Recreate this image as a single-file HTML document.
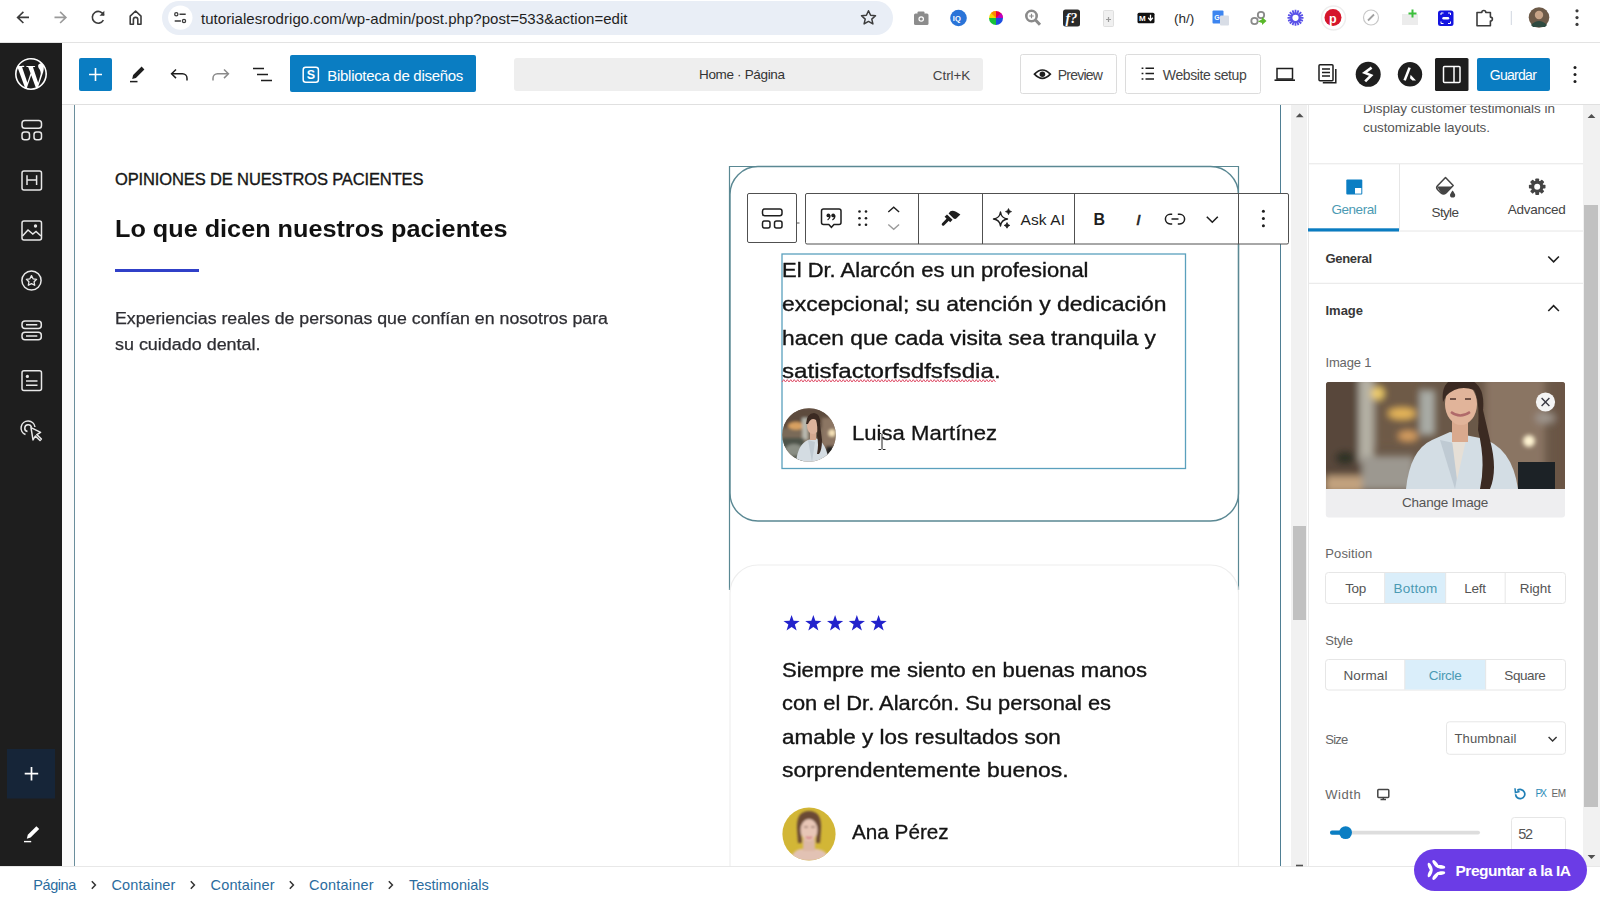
<!DOCTYPE html>
<html><head><meta charset="utf-8">
<style>
*{box-sizing:border-box;margin:0;padding:0}
html,body{width:1600px;height:900px;overflow:hidden;background:#fff;font-family:"Liberation Sans",sans-serif;position:relative}
.a{position:absolute}
svg{display:block}
/* browser chrome */
#chrome{left:0;top:0;width:1600px;height:43px;background:#fff;border-bottom:1px solid #e3e3e3}
#omni{left:162px;top:1px;width:731px;height:34px;border-radius:17px;background:#e9eef6}
#url{left:201px;top:8px;font-size:15.5px;color:#1f1f1f;letter-spacing:0}
/* wp header */
#hdr{left:62px;top:43px;width:1538px;height:62px;background:#fff;border-bottom:1px solid #e0e0e0;z-index:8}
#wpside{left:0;top:43px;width:62px;height:824px;background:#1e1e1e;z-index:8}
#gap{left:62px;top:105px;width:12px;height:762px;background:#fbfbfb}
#canvas{left:74px;top:105px;width:1207px;height:762px;background:#fff;border-left:1px solid #6a8e9c}
#rline{left:1280px;top:105px;width:1px;height:762px;background:#4f7f94}
#sb1{left:1291px;top:105px;width:16px;height:762px;background:#f1f1f1}
#sb1t{left:1293px;top:526px;width:13px;height:94px;background:#c1c1c1}
#side{left:1308px;top:105px;width:275px;height:762px;background:#fff;border-left:1px solid #e8e8e8}
#sb2{left:1583px;top:105px;width:17px;height:762px;background:#f1f1f1}
#sb2t{left:1584px;top:205px;width:14px;height:602px;background:#c1c1c1}
#foot{left:0;top:866px;width:1600px;height:34px;background:#fff;border-top:1px solid #e8e8e8;z-index:20}
.bc{top:876px;font-size:15px;color:#2271b1}
.bcs{top:874px;font-size:16px;color:#555}
</style></head><body>
<div id="chrome" class="a"></div>
<div id="omni" class="a"></div>


<div id="hdr" class="a"></div>
<div id="wpside" class="a"></div>
<div id="gap" class="a"></div>
<div id="canvas" class="a"></div>
<div id="rline" class="a"></div>
<div id="sb1" class="a"></div>
<div id="sb1t" class="a"></div>
<div id="side" class="a"></div>
<div id="sb2" class="a"></div>
<div id="sb2t" class="a"></div>
<div id="foot" class="a"></div>


<!-- canvas content -->


<div class="a" style="left:115px;top:269px;width:84px;height:3px;background:#3040c8"></div>


<svg class="a" style="left:0;top:0" width="1600" height="866">
 <!-- selected container outline -->
 <path d="M729.5 590 V166.5 H1238.5 V590" fill="none" stroke="#5a8893" stroke-width="1.2"/>
 <!-- card 1 rounded -->
 <rect x="730" y="166.5" width="508.5" height="354.5" rx="28" fill="none" stroke="#5a8893" stroke-width="1.4"/>
 <!-- card 2 faint -->
 <rect x="730" y="565" width="508.5" height="400" rx="28" fill="none" stroke="#eeeeee" stroke-width="1.2"/>
 <!-- selection box -->
 <rect x="782" y="254" width="403.5" height="214.5" fill="none" stroke="#5aa0bd" stroke-width="1.3"/>
</svg>










<!-- WP header content -->
<svg class="a" style="left:0;top:0;z-index:9" width="1600" height="105">
 <!-- WP logo -->
 <path transform="translate(15,58) scale(1.3333)" fill="#fff" d="M21.469 6.825c.84 1.537 1.318 3.3 1.318 5.175 0 3.979-2.156 7.456-5.363 9.325l3.295-9.527c.615-1.54.82-2.771.82-3.864 0-.405-.026-.78-.07-1.11m-7.981.105c.647-.03 1.232-.105 1.232-.105.582-.075.514-.93-.067-.899 0 0-1.755.135-2.88.135-1.064 0-2.850-.15-2.850-.15-.585-.03-.661.855-.075.885 0 0 .54.061 1.125.09l1.68 4.605-2.37 7.08L5.354 6.9c.649-.03 1.234-.1 1.234-.1.585-.075.516-.93-.065-.896 0 0-1.746.138-2.874.138-.2 0-.438-.008-.69-.015C4.911 3.15 8.235 1.215 12 1.215c2.809 0 5.365 1.072 7.286 2.833-.046-.003-.091-.009-.141-.009-1.06 0-1.812.923-1.812 1.914 0 .89.513 1.643 1.06 2.531.411.72.89 1.643.89 2.977 0 .915-.354 1.994-.821 3.479l-1.075 3.585-3.9-11.61.001.014zM12 22.784c-1.059 0-2.081-.153-3.048-.437l3.237-9.406 3.315 9.087c.024.053.05.101.078.149-1.12.393-2.325.609-3.582.609M1.211 12c0-1.564.336-3.05.935-4.39L7.29 21.709C3.694 19.960 1.212 16.271 1.211 12M12 0C5.385 0 0 5.385 0 12s5.385 12 12 12 12-5.385 12-12S18.615 0 12 0"/>
 <!-- plus button -->
 <rect x="79" y="58" width="33" height="33" rx="2" fill="#0a7dc2"/>
 <path d="M95.5 68v13M89 74.5h13" stroke="#fff" stroke-width="1.6"/>
 <!-- pencil -->
 <path d="M141.6 66.6 L144.4 69.4 L135.9 77.9 L132.2 79 L133.1 75.1z" fill="#1e1e1e"/>
 <path d="M130 81.6h7.5" stroke="#1e1e1e" stroke-width="1.5"/>
 <!-- undo -->
 <path d="M171.8 73.8 H182.5 A4.5 4.5 0 0 1 187 78.3 V80.5" fill="none" stroke="#1e1e1e" stroke-width="1.5"/>
 <path d="M176 69.5 L171.6 73.8 L176 78.1" fill="none" stroke="#1e1e1e" stroke-width="1.5"/>
 <!-- redo -->
 <path d="M228.2 73.8 H217.5 A4.5 4.5 0 0 0 213 78.3 V80.5" fill="none" stroke="#8a8a8a" stroke-width="1.5"/>
 <path d="M224 69.5 L228.4 73.8 L224 78.1" fill="none" stroke="#8a8a8a" stroke-width="1.5"/>
 <!-- list view -->
 <path d="M253 68.6h11M257 74.6h11M261 80.6h11" stroke="#1e1e1e" stroke-width="1.5"/>
 <!-- biblioteca -->
 <rect x="290" y="55" width="186" height="37" rx="2" fill="#0a7dc2"/>
 <rect x="303.2" y="67.2" width="15.2" height="15" rx="2.5" fill="none" stroke="#fff" stroke-width="1.5"/>
 <!-- command bar -->
 <rect x="514" y="58" width="469" height="33" rx="3" fill="#eeeeee"/>
 <!-- preview -->
 <rect x="1020.5" y="54.5" width="96" height="39" rx="2" fill="#fff" stroke="#dcdcdc"/>
 <rect x="1125.5" y="54.5" width="135" height="39" rx="2" fill="#fff" stroke="#dcdcdc"/>
 <path d="M1034.5 74.2 Q1042.4 65.8 1050.3 74.2 Q1042.4 82.6 1034.5 74.2Z" fill="none" stroke="#1e1e1e" stroke-width="1.7"/>
 <circle cx="1042.4" cy="74.2" r="2.8" fill="#1e1e1e"/>
 <!-- website setup list -->
 <path d="M1145.5 68.3h8.5M1145.5 73.6h8.5M1145.5 78.9h8.5" stroke="#1e1e1e" stroke-width="1.5"/>
 <path d="M1141.6 68.3h1.8M1141.6 73.6h1.8M1141.6 78.9h1.8" stroke="#1e1e1e" stroke-width="1.5"/>
 <!-- laptop -->
 <rect x="1277" y="68.5" width="15.5" height="10.5" fill="none" stroke="#1e1e1e" stroke-width="1.5"/>
 <path d="M1274.5 80.2h20.5" stroke="#1e1e1e" stroke-width="1.6"/>
 <!-- pages icon -->
 <rect x="1319" y="64.8" width="14" height="16" rx="1" fill="none" stroke="#1e1e1e" stroke-width="1.5"/>
 <path d="M1322 69h8M1322 72.5h8M1322 76h8" stroke="#1e1e1e" stroke-width="1.3"/>
 <path d="M1335.8 69v13.8h-13" fill="none" stroke="#1e1e1e" stroke-width="1.5"/>
 <!-- S circle -->
 <circle cx="1368.2" cy="74.3" r="12.5" fill="#1e1e1e"/>
 <path d="M1371.6 67.6 L1364.6 72.6 L1371.2 75.4 L1365.2 81.4" fill="none" stroke="#fff" stroke-width="2.6" stroke-linejoin="miter" stroke-miterlimit="3"/>
 <!-- A circle -->
 <circle cx="1410" cy="74.3" r="12.2" fill="#1e1e1e"/>
 <path d="M1409.6 67.6 L1404.6 80.4" fill="none" stroke="#fff" stroke-width="2.6"/><path d="M1410.6 74.8 L1416 80.6 L1412.4 80.6 L1410 78.2z" fill="#fff"/>
 <!-- black square -->
 <rect x="1435" y="58" width="33.5" height="33" rx="1.5" fill="#1e1e1e"/>
 <rect x="1443.5" y="66.5" width="16.5" height="16" rx="1" fill="none" stroke="#fff" stroke-width="1.5"/>
 <path d="M1454 66.5v16" stroke="#fff" stroke-width="1.5"/>
 <!-- guardar -->
 <rect x="1477" y="58" width="73" height="33" rx="2" fill="#0a7dc2"/>
 <!-- dots -->
 <circle cx="1575" cy="67.5" r="1.5" fill="#1e1e1e"/>
 <circle cx="1575" cy="74.5" r="1.5" fill="#1e1e1e"/>
 <circle cx="1575" cy="81.5" r="1.5" fill="#1e1e1e"/>
</svg>










<!--B:canvastext-->
<div class="a t" style="left:115px;top:171.23px;font-size:16.5px;line-height:16.5px;letter-spacing:-0.128px;color:#161616;-webkit-text-stroke:0.35px #161616">OPINIONES DE NUESTROS PACIENTES</div>
<div class="a t" style="left:115px;top:217.93px;font-size:23px;line-height:23px;letter-spacing:0.000px;color:#111;font-weight:bold;transform:scaleX(1.0968);transform-origin:0 0">Lo que dicen nuestros pacientes</div>
<div class="a t" style="left:115px;top:310.76px;font-size:16px;line-height:16px;letter-spacing:0.000px;color:#2e2e33;transform:scaleX(1.1085);transform-origin:0 0;-webkit-text-stroke:0.25px #2e2e33">Experiencias reales de personas que confían en nosotros para</div>
<div class="a t" style="left:115px;top:337.26px;font-size:16px;line-height:16px;letter-spacing:0.000px;color:#2e2e33;transform:scaleX(1.1203);transform-origin:0 0;-webkit-text-stroke:0.25px #2e2e33">su cuidado dental.</div>
<div class="a t" style="left:782px;top:261.44px;font-size:19.8px;line-height:19.8px;letter-spacing:0.000px;color:#141414;transform:scaleX(1.1105);transform-origin:0 0;-webkit-text-stroke:0.35px #141414">El Dr. Alarcón es un profesional</div>
<div class="a t" style="left:782px;top:294.94px;font-size:19.8px;line-height:19.8px;letter-spacing:0.000px;color:#141414;transform:scaleX(1.1578);transform-origin:0 0;-webkit-text-stroke:0.35px #141414">excepcional; su atención y dedicación</div>
<div class="a t" style="left:782px;top:328.54px;font-size:19.8px;line-height:19.8px;letter-spacing:0.000px;color:#141414;transform:scaleX(1.1489);transform-origin:0 0;-webkit-text-stroke:0.35px #141414">hacen que cada visita sea tranquila y</div>
<div class="a t" style="left:782px;top:361.74px;font-size:19.8px;line-height:19.8px;letter-spacing:0.000px;color:#141414;transform:scaleX(1.2198);transform-origin:0 0;-webkit-text-stroke:0.35px #141414">satisfactorfsdfsfsdia.</div>
<div class="a t" style="left:852px;top:422.85px;font-size:20.5px;line-height:20.5px;letter-spacing:0.000px;color:#141414;transform:scaleX(1.0784);transform-origin:0 0;-webkit-text-stroke:0.3px #141414">Luisa Martínez</div>
<div class="a t" style="left:782px;top:660.74px;font-size:19.8px;line-height:19.8px;letter-spacing:0.000px;color:#141414;transform:scaleX(1.1139);transform-origin:0 0;-webkit-text-stroke:0.35px #141414">Siempre me siento en buenas manos</div>
<div class="a t" style="left:782px;top:694.34px;font-size:19.8px;line-height:19.8px;letter-spacing:0.000px;color:#141414;transform:scaleX(1.1041);transform-origin:0 0;-webkit-text-stroke:0.35px #141414">con el Dr. Alarcón. Su personal es</div>
<div class="a t" style="left:782px;top:727.94px;font-size:19.8px;line-height:19.8px;letter-spacing:0.000px;color:#141414;transform:scaleX(1.1366);transform-origin:0 0;-webkit-text-stroke:0.35px #141414">amable y los resultados son</div>
<div class="a t" style="left:782px;top:761.14px;font-size:19.8px;line-height:19.8px;letter-spacing:0.000px;color:#141414;transform:scaleX(1.1582);transform-origin:0 0;-webkit-text-stroke:0.35px #141414">sorprendentemente buenos.</div>
<div class="a t" style="left:852px;top:822.05px;font-size:20.5px;line-height:20.5px;letter-spacing:0.000px;color:#141414;transform:scaleX(1.0101);transform-origin:0 0;-webkit-text-stroke:0.3px #141414">Ana Pérez</div>
<!--E:canvastext-->
<!--B:toolbar-->
<svg class="a" style="left:0;top:0;z-index:5" width="1600" height="300">
 <rect x="747.5" y="193.5" width="49" height="49" rx="1.5" fill="#fff" stroke="#505050" stroke-width="1"/>
 <path d="M797 223h2.5" stroke="#505050" stroke-width="1"/>
 <rect x="805.5" y="193.5" width="483" height="50.5" rx="1.5" fill="#fff" stroke="#505050" stroke-width="1"/>
 <path d="M918.5 194v50M982.5 194v50M1074.5 194v50M1238.5 194v50" stroke="#505050" stroke-width="1"/>
 <!-- parent selector icon -->
 <rect x="762.5" y="209" width="19.5" height="6.8" rx="2.2" fill="none" stroke="#1e1e1e" stroke-width="1.5"/>
 <rect x="762.5" y="221" width="7.5" height="7" rx="2" fill="none" stroke="#1e1e1e" stroke-width="1.5"/>
 <rect x="774.5" y="221" width="7.5" height="7" rx="2" fill="none" stroke="#1e1e1e" stroke-width="1.5"/>
 <!-- quote bubble -->
 <path d="M823.5 209h15.5a2 2 0 0 1 2 2v11.5a2 2 0 0 1 -2 2h-5l-2.6 2.8l-2.6 -2.8h-5.3a2 2 0 0 1 -2 -2v-11.5a2 2 0 0 1 2 -2z" fill="none" stroke="#1e1e1e" stroke-width="1.5"/>
 <g fill="#1e1e1e"><circle cx="828.4" cy="215.4" r="1.9"/><circle cx="833.2" cy="215.4" r="1.9"/></g>
 <path d="M830.1 215.6 Q830.1 218.6 827.6 220M834.9 215.6 Q834.9 218.6 832.4 220" fill="none" stroke="#1e1e1e" stroke-width="1.4"/>
 <!-- drag dots -->
 <g fill="#1e1e1e"><circle cx="859.5" cy="211.5" r="1.3"/><circle cx="866" cy="211.5" r="1.3"/><circle cx="859.5" cy="218.2" r="1.3"/><circle cx="866" cy="218.2" r="1.3"/><circle cx="859.5" cy="224.8" r="1.3"/><circle cx="866" cy="224.8" r="1.3"/></g>
 <!-- chevrons -->
 <path d="M888.3 212L893.7 207.3L899.1 212" fill="none" stroke="#1e1e1e" stroke-width="1.4"/>
 <path d="M888.3 224.5L893.7 229.2L899.1 224.5" fill="none" stroke="#9a9a9a" stroke-width="1.4"/>
 <!-- brush -->
 <path d="M943.2 224.2 L948 219.4" stroke="#1e1e1e" stroke-width="3" stroke-linecap="round"/>
 <path d="M944.6 216.8 L947 214.4 L952.6 219.8 L950.2 222.2z" fill="#1e1e1e"/>
 <path d="M948.6 213.4 L950.4 211.2 Q954.2 209.6 960.4 214.6 L956 218.8 Q954.6 219.2 953.6 218.6z" fill="#1e1e1e"/>
 <!-- sparkles -->
 <path d="M1000.5 212 Q1001.3 218.3 1007.5 219 Q1001.3 219.7 1000.5 226 Q999.7 219.7 993.5 219 Q999.7 218.3 1000.5 212z" fill="none" stroke="#1e1e1e" stroke-width="1.4" stroke-linejoin="round"/>
 <path d="M1008.5 208.6 Q1008.9 211.2 1011.5 211.6 Q1008.9 212 1008.5 214.6 Q1008.1 212 1005.5 211.6 Q1008.1 211.2 1008.5 208.6z" fill="#1e1e1e" stroke="#1e1e1e" stroke-width="0.8" stroke-linejoin="round"/>
 <path d="M1007 222.6 Q1007.4 225 1009.8 225.4 Q1007.4 225.8 1007 228.2 Q1006.6 225.8 1004.2 225.4 Q1006.6 225 1007 222.6z" fill="#1e1e1e" stroke="#1e1e1e" stroke-width="0.8" stroke-linejoin="round"/>
 <!-- link -->
 <path d="M1172.2 214.3h-2a4.8 4.8 0 0 0 0 9.6h2M1177.8 214.3h2a4.8 4.8 0 0 1 0 9.6h-2M1171.5 219.1h7" fill="none" stroke="#1e1e1e" stroke-width="1.5"/>
 <!-- chevron down -->
 <path d="M1206.8 216.8L1212.3 222.2L1217.8 216.8" fill="none" stroke="#1e1e1e" stroke-width="1.6"/>
 <!-- dots -->
 <g fill="#1e1e1e"><circle cx="1263.4" cy="211.3" r="1.5"/><circle cx="1263.4" cy="218.5" r="1.5"/><circle cx="1263.4" cy="225.7" r="1.5"/></g>
</svg>
<div class="a t" style="left:1020.5px;top:212.18px;font-size:15.5px;line-height:15.5px;letter-spacing:0.113px;color:#1e1e1e;z-index:6">Ask AI</div>
<div class="a t" style="left:1093.5px;top:211.76px;font-size:16px;line-height:16px;letter-spacing:0.000px;color:#1e1e1e;font-weight:bold;z-index:6">B</div>
<div class="a t" style="left:1136.2px;top:212.18px;font-size:15.5px;line-height:15.5px;letter-spacing:0.000px;color:#1e1e1e;z-index:6;font-style:italic;-webkit-text-stroke:0.6px #1e1e1e">I</div>
<!--E:toolbar-->
<!--B:side-->
<svg class="a" style="left:0;top:0;z-index:3" width="1600" height="900">
 <!-- tabs -->
 <path d="M1309 163.8H1583M1309 231H1583" stroke="#e6e6e6" stroke-width="1"/>
 <path d="M1399.5 164v66" stroke="#e6e6e6" stroke-width="1"/>
 <rect x="1308" y="228.3" width="91" height="3.2" fill="#0a7cc1"/>
 <rect x="1346.3" y="179.6" width="16" height="15" rx="1" fill="#0b7ec3"/>
 <rect x="1355" y="188" width="6.3" height="5.6" fill="#fff"/>
 <!-- bucket -->
 <path d="M1445.5 177.5 L1453.2 185.5 L1446 193 Q1443.5 195 1441 193 L1437.5 189.5 Q1435.8 187.6 1437.5 185.8z" fill="none" stroke="#444" stroke-width="1.5" stroke-linejoin="round"/>
 <path d="M1437 186.6 H1452 L1446 192.8 Q1443.5 195 1441 192.8z" fill="#444"/>
 <path d="M1452.6 190.5 Q1450 194 1450 195 a2.6 2.6 0 0 0 5.2 0 Q1455.2 194 1452.6 190.5z" fill="#444"/>
 <!-- gear -->
 <g transform="translate(1537.2,186.7)" fill="#444">
  <circle r="6.2"/>
  <g><rect x="-1.9" y="-8.3" width="3.8" height="16.6" rx="0.8"/><rect x="-1.9" y="-8.3" width="3.8" height="16.6" rx="0.8" transform="rotate(45)"/><rect x="-1.9" y="-8.3" width="3.8" height="16.6" rx="0.8" transform="rotate(90)"/><rect x="-1.9" y="-8.3" width="3.8" height="16.6" rx="0.8" transform="rotate(135)"/></g>
  <circle r="3" fill="#fff"/>
 </g>
 <!-- section dividers -->
 <path d="M1309 283.3H1583" stroke="#e6e6e6" stroke-width="1"/>
 <path d="M1548.3 256.5L1553.6 261.8L1558.9 256.5" fill="none" stroke="#1e1e1e" stroke-width="1.6"/>
 <path d="M1548.3 311L1553.6 305.7L1558.9 311" fill="none" stroke="#1e1e1e" stroke-width="1.6"/>
 <!-- change image btn -->
 <rect x="1325.8" y="382" width="239.2" height="135.5" rx="3" fill="#eeeef0"/>
 <!-- segmented position -->
 <rect x="1325.5" y="572.5" width="240" height="31" rx="3" fill="#fff" stroke="#e6e6e6"/>
 <rect x="1385" y="573" width="60.7" height="30" fill="#daeefa"/>
 <path d="M1384.7 573v30M1445.7 573v30M1505.2 573v30" stroke="#e6e6e6"/>
 <rect x="1325.5" y="659.5" width="240" height="30.5" rx="3" fill="#fff" stroke="#e6e6e6"/>
 <rect x="1405" y="660" width="80.7" height="29.5" fill="#daeefa"/>
 <path d="M1404.8 660v29.5M1485.7 660v29.5" stroke="#e6e6e6"/>
 <!-- size dropdown -->
 <rect x="1446.5" y="721.8" width="119" height="32.5" rx="3" fill="#fff" stroke="#e6e6e6"/>
 <path d="M1548.6 737L1552.6 741L1556.6 737" fill="none" stroke="#333" stroke-width="1.4"/>
 <!-- monitor -->
 <rect x="1377.8" y="789.6" width="11" height="7.8" rx="0.8" fill="none" stroke="#444" stroke-width="1.5"/>
 <path d="M1380.5 799.6h5.5M1383.3 797.4v2" stroke="#444" stroke-width="1.5"/>
 <!-- reset -->
 <path d="M1517.3 790.5 A4.6 4.6 0 1 1 1515.6 794.2" fill="none" stroke="#1f7fb6" stroke-width="1.7"/>
 <path d="M1515 788.3 L1515.4 792.6 L1519.6 791.6" fill="none" stroke="#1f7fb6" stroke-width="1.5"/>
 <!-- slider -->
 <rect x="1330" y="830.7" width="150" height="3.8" rx="1.9" fill="#dddddd"/>
 <rect x="1330" y="830.5" width="16" height="4.2" rx="2" fill="#0b7ec3"/>
 <circle cx="1345.6" cy="832.6" r="6.4" fill="#0b7ec3"/>
 <!-- input -->
 <rect x="1511.5" y="817.5" width="54" height="40" rx="3" fill="#fff" stroke="#e6e6e6"/>
</svg>
<svg class="a" style="left:1530px;top:387px;z-index:6" width="31" height="31">
 <circle cx="15.5" cy="15" r="9.6" fill="#f4f4f4"/>
 <path d="M11.6 11.1l7.8 7.8M19.4 11.1l-7.8 7.8" stroke="#3a3a44" stroke-width="1.4"/>
</svg>
<div class="a t" style="z-index:4;left:1363px;top:102.07px;font-size:13.5px;line-height:13.5px;letter-spacing:-0.027px;color:#555">Display customer testimonials in</div>
<div class="a t" style="z-index:4;left:1363px;top:121.27px;font-size:13.5px;line-height:13.5px;letter-spacing:-0.103px;color:#555">customizable layouts.</div>
<div class="a t" style="z-index:4;left:1331.4px;top:202.87px;font-size:13.5px;line-height:13.5px;letter-spacing:-0.439px;color:#4b9ab3">General</div>
<div class="a t" style="z-index:4;left:1431.5px;top:206.17px;font-size:13.5px;line-height:13.5px;letter-spacing:-0.629px;color:#444">Style</div>
<div class="a t" style="z-index:4;left:1507.8px;top:202.57px;font-size:13.5px;line-height:13.5px;letter-spacing:-0.292px;color:#444">Advanced</div>
<div class="a t" style="z-index:4;left:1325.5px;top:252.40px;font-size:13px;line-height:13px;letter-spacing:-0.320px;color:#383838;font-weight:bold">General</div>
<div class="a t" style="z-index:4;left:1325.5px;top:304.20px;font-size:13px;line-height:13px;letter-spacing:-0.020px;color:#383838;font-weight:bold">Image</div>
<div class="a t" style="z-index:4;left:1325.5px;top:355.60px;font-size:13px;line-height:13px;letter-spacing:-0.164px;color:#666">Image 1</div>
<div class="a t" style="z-index:4;left:1402px;top:496.07px;font-size:13.5px;line-height:13.5px;letter-spacing:-0.206px;color:#555">Change Image</div>
<div class="a t" style="z-index:4;left:1325.3px;top:546.80px;font-size:13px;line-height:13px;letter-spacing:0.107px;color:#666">Position</div>
<div class="a t" style="z-index:4;left:1345.2px;top:581.87px;font-size:13.5px;line-height:13.5px;letter-spacing:-0.391px;color:#555">Top</div>
<div class="a t" style="z-index:4;left:1393.6px;top:581.87px;font-size:13.5px;line-height:13.5px;letter-spacing:0.184px;color:#4b9ab3">Bottom</div>
<div class="a t" style="z-index:4;left:1464.3px;top:581.87px;font-size:13.5px;line-height:13.5px;letter-spacing:-0.277px;color:#555">Left</div>
<div class="a t" style="z-index:4;left:1519.8px;top:581.87px;font-size:13.5px;line-height:13.5px;letter-spacing:-0.104px;color:#555">Right</div>
<div class="a t" style="z-index:4;left:1325.3px;top:633.90px;font-size:13px;line-height:13px;letter-spacing:-0.327px;color:#666">Style</div>
<div class="a t" style="z-index:4;left:1343.4px;top:668.97px;font-size:13.5px;line-height:13.5px;letter-spacing:0.117px;color:#555">Normal</div>
<div class="a t" style="z-index:4;left:1428.8px;top:668.97px;font-size:13.5px;line-height:13.5px;letter-spacing:-0.323px;color:#4b9ab3">Circle</div>
<div class="a t" style="z-index:4;left:1504.3px;top:668.97px;font-size:13.5px;line-height:13.5px;letter-spacing:-0.409px;color:#555">Square</div>
<div class="a t" style="z-index:4;left:1325.3px;top:732.80px;font-size:13px;line-height:13px;letter-spacing:-0.799px;color:#666">Size</div>
<div class="a t" style="z-index:4;left:1454.5px;top:731.90px;font-size:13px;line-height:13px;letter-spacing:0.150px;color:#555">Thumbnail</div>
<div class="a t" style="z-index:4;left:1325.3px;top:787.50px;font-size:13px;line-height:13px;letter-spacing:0.541px;color:#666">Width</div>
<div class="a t" style="z-index:4;left:1535.4px;top:788.63px;font-size:10px;line-height:10px;letter-spacing:-1.744px;color:#2e8cb8">PX</div>
<div class="a t" style="z-index:4;left:1551.4px;top:788.63px;font-size:10px;line-height:10px;letter-spacing:-0.400px;color:#666">EM</div>
<div class="a t" style="z-index:4;left:1518.2px;top:826.63px;font-size:14.5px;line-height:14.5px;letter-spacing:-1.241px;color:#555">52</div>
<!--E:side-->
<!--B:photo-->
<svg class="a" style="left:1326px;top:382px;z-index:4" width="239" height="107" viewBox="0 0 239 107">
 <defs>
  <filter id="bl6" x="-50%" y="-50%" width="200%" height="200%"><feGaussianBlur stdDeviation="3.5"/></filter>
  <filter id="bl2" x="-50%" y="-50%" width="200%" height="200%"><feGaussianBlur stdDeviation="2"/></filter>
  <filter id="bl1" x="-50%" y="-50%" width="200%" height="200%"><feGaussianBlur stdDeviation="0.7"/></filter>
  <clipPath id="pc"><path d="M3 0H236A3 3 0 0 1 239 3V107H0V3A3 3 0 0 1 3 0z"/></clipPath>
 </defs>
 <g clip-path="url(#pc)">
 <rect width="239" height="107" fill="#6a5848"/>
 <g filter="url(#bl6)">
  <rect x="-10" y="-10" width="45" height="130" fill="#58473a"/>
  <rect x="33" y="-5" width="15" height="85" fill="#b4b0a4"/>
  <rect x="50" y="-5" width="44" height="70" fill="#6e5a46"/>
  <circle cx="51.59999999999991" cy="11.399999999999977" r="6.5" fill="#f2cf6a"/>
  <ellipse cx="76" cy="31.5" rx="14" ry="5.5" fill="#e9b85a"/>
  <ellipse cx="82" cy="54" rx="10" ry="5" fill="#d9a060"/>
  <rect x="94" y="8" width="15" height="45" fill="#a9aca6"/>
  <rect x="36" y="74" width="52" height="34" fill="#9c9890"/>
  <rect x="0" y="94" width="36" height="16" fill="#c2a27e"/>
  <ellipse cx="19" cy="76" rx="10" ry="7" fill="#2e3128"/>
  <rect x="159" y="-5" width="60" height="120" fill="#8a7464"/>
  <rect x="229" y="-5" width="20" height="120" fill="#6a5444"/>
  <ellipse cx="219" cy="36" rx="10" ry="6" fill="#9d948c"/>
 </g>
 <circle cx="203" cy="59" r="6" fill="#fff4d2" filter="url(#bl2)"/>
 <rect x="192" y="80" width="37" height="30" fill="#1c2428" filter="url(#bl1)"/>
 <g filter="url(#bl1)">
  <!-- coat -->
  <path d="M80 107 Q84 68 106 58 L124 50 L154 56 Q186 64 192 107z" fill="#d3dde4"/>
  <path d="M114 58 L129 107 L137 63z" fill="#bfcad3"/>
  <path d="M126 58 L131 98 L140 58z" fill="#e6dfd6"/>
  <!-- neck -->
  <rect x="126" y="38" width="16" height="22" fill="#d9a98e"/>
  <!-- face -->
  <ellipse cx="135" cy="22" rx="16" ry="21" fill="#e1b49a"/>
  <!-- hair -->
  <path d="M117 20 Q114 -4 136 -4 Q160 -2 157 28 L164 58 Q172 88 164 107 L154 107 Q160 80 152 48 Q154 18 148 8 Q132 2 120 14z" fill="#3b2a22"/>
  <path d="M125 30 Q134 37 144 30" stroke="#b06a6a" stroke-width="2.4" fill="none"/>
  <path d="M124 17h6M139 17h6" stroke="#4a3028" stroke-width="1.6"/>
 </g>
 </g>
</svg>
<!--E:photo-->
<!--B:misc-->
<svg class="a" style="left:0;top:0;z-index:9" width="62" height="866">
 <g fill="none" stroke="#e8e8e8" stroke-width="1.5">
  <rect x="22" y="120.5" width="19.5" height="7.8" rx="2.8"/>
  <rect x="22" y="132" width="7.5" height="7.8" rx="2.5"/>
  <rect x="34" y="132" width="7.5" height="7.8" rx="2.5"/>
  <rect x="22" y="171" width="19.5" height="19" rx="2"/>
  <path d="M27 175.3v9.6M36.6 175.3v9.6M27 180.1h9.6"/>
  <rect x="22" y="221" width="19.5" height="19" rx="2"/>
  <path d="M22.5 236 L28 230 L32.8 234 L36 231.5 L41 236"/>
  <circle cx="31.5" cy="280.5" r="9.6"/>
  <path d="M31.5 275.6l1.6 3.2 3.5.5-2.5 2.5.6 3.5-3.2-1.7-3.2 1.7.6-3.5-2.5-2.5 3.5-.5z" stroke-width="1.3" stroke-linejoin="round"/>
  <rect x="22" y="321" width="19.3" height="7.4" rx="3"/>
  <rect x="22" y="332.3" width="19.3" height="7.4" rx="3"/>
  <path d="M26 324.7h11.3M26 336h11.3"/>
  <rect x="22" y="370.8" width="19.5" height="19.6" rx="2"/>
  <path d="M26 381h11.5M26 385.2h11.5"/>
  <path d="M25.5 434.5 A7 7 0 1 1 35 427" />
  <path d="M27.5 431.5 A3.4 3.4 0 1 1 31.5 427.5"/>
  <path d="M31 427.6 L33 440 L35.3 436 L40 440.5 L41.4 439 L36.8 434.6 L40.6 432.3z" stroke-linejoin="round" fill="#1e1e1e"/>
 </g>
 <circle cx="35.5" cy="226" r="1.7" fill="#e8e8e8"/>
 <circle cx="27.4" cy="376.4" r="1.6" fill="#e8e8e8"/>
 <rect x="7" y="749" width="48" height="49.5" fill="#162538"/>
 <path d="M31.5 767v13.5M24.7 773.7h13.5" stroke="#fff" stroke-width="1.7"/>
 <path d="M36.4 826.2 L39.2 829 L30.6 837.6 L26.8 838.8 L27.8 834.8z" fill="#fff"/>
 <path d="M24 841.6h7.2" stroke="#fff" stroke-width="1.4"/>
</svg>
<svg class="a" style="left:1290px;top:105px;z-index:3" width="310" height="770">
 <path d="M5.8 12.3 l3.9-4 3.9 4z" fill="#505050"/>
 <path d="M297.6 13 l3.9-4 3.9 4z" fill="#505050"/>
</svg>
<svg class="a" style="left:1580px;top:850px;z-index:21" width="20" height="16">
 <path d="M7.6 5 l3.9 4 3.9-4z" fill="#505050"/>
</svg>
<svg class="a" style="left:1290px;top:857px;z-index:21" width="20" height="20">
 <path d="M6 8.5h7" stroke="#505050" stroke-width="1.6"/>
</svg>
<!-- preguntar -->
<div class="a" style="left:1414px;top:849px;width:173px;height:41.5px;border-radius:21px;background:#6b3ce6;z-index:22"></div>
<svg class="a" style="left:1420px;top:853px;z-index:23" width="40" height="34"><g fill="#fff"><ellipse cx="20.87" cy="20.10" rx="4.4" ry="1.8" transform="rotate(-8.0 20.87 20.10)"/><ellipse cx="20.87" cy="13.90" rx="4.4" ry="1.8" transform="rotate(8.0 20.87 13.90)"/><ellipse cx="15.50" cy="10.80" rx="4.4" ry="1.8" transform="rotate(-128.0 15.50 10.80)"/><ellipse cx="10.13" cy="13.90" rx="4.4" ry="1.8" transform="rotate(-112.0 10.13 13.90)"/><ellipse cx="10.13" cy="20.10" rx="4.4" ry="1.8" transform="rotate(-248.0 10.13 20.10)"/><ellipse cx="15.50" cy="23.20" rx="4.4" ry="1.8" transform="rotate(-232.0 15.50 23.20)"/></g></svg>
<svg class="a" style="left:0;top:870px;z-index:21" width="420" height="30"><path d="M91.8 11.3 l3.6 3.7 -3.6 3.7" fill="none" stroke="#333" stroke-width="1.5"/><path d="M190.8 11.3 l3.6 3.7 -3.6 3.7" fill="none" stroke="#333" stroke-width="1.5"/><path d="M289.8 11.3 l3.6 3.7 -3.6 3.7" fill="none" stroke="#333" stroke-width="1.5"/><path d="M388.8 11.3 l3.6 3.7 -3.6 3.7" fill="none" stroke="#333" stroke-width="1.5"/></svg>
<div class="a t" style="left:1455.5px;top:863.38px;font-size:15.5px;line-height:15.5px;letter-spacing:-0.480px;color:#fff;font-weight:bold;z-index:23">Preguntar a la IA</div>
<div class="a t" style="left:33.3px;top:877.73px;font-size:14.5px;line-height:14.5px;letter-spacing:-0.431px;color:#2b6c9e;z-index:21">Página</div>
<div class="a t" style="left:111.4px;top:877.73px;font-size:14.5px;line-height:14.5px;letter-spacing:0.141px;color:#2b6c9e;z-index:21">Container</div>
<div class="a t" style="left:210.6px;top:877.73px;font-size:14.5px;line-height:14.5px;letter-spacing:0.141px;color:#2b6c9e;z-index:21">Container</div>
<div class="a t" style="left:309px;top:877.73px;font-size:14.5px;line-height:14.5px;letter-spacing:0.228px;color:#2b6c9e;z-index:21">Container</div>
<div class="a t" style="left:409px;top:877.73px;font-size:14.5px;line-height:14.5px;letter-spacing:-0.007px;color:#2b6c9e;z-index:21">Testimonials</div>
<!--E:misc-->
<!--B:chrome-->
<svg class="a" style="left:0;top:0;z-index:2" width="1600" height="42">
 <!-- back -->
 <path d="M29 17.4H18.2M23.4 11.8L17.6 17.4L23.4 23" fill="none" stroke="#3c3c3c" stroke-width="1.6"/>
 <path d="M54.5 17.4H65.3M60.1 11.8L65.9 17.4L60.1 23" fill="none" stroke="#9a9a9a" stroke-width="1.6"/>
 <!-- reload -->
 <path d="M103.8 15.3 A5.9 5.9 0 1 0 103.4 20.2" fill="none" stroke="#3c3c3c" stroke-width="1.6"/>
 <path d="M104.3 10.8 V15.8 H99.5z" fill="#3c3c3c"/>
 <!-- home -->
 <path d="M130.2 24.2 V16.2 L135.6 11 L141 16.2 V24.2 H137.8 V19.6 A2.2 2.2 0 0 0 133.4 19.6 V24.2z" fill="none" stroke="#3c3c3c" stroke-width="1.6" stroke-linejoin="round"/>
 <!-- omnibox chip -->
 <circle cx="180.3" cy="17.6" r="12.2" fill="#fff"/>
 <circle cx="176.3" cy="14.2" r="1.6" fill="none" stroke="#3c3c3c" stroke-width="1.3"/>
 <path d="M179.5 14.2h6.2M174.7 21h6.2" stroke="#3c3c3c" stroke-width="1.4"/>
 <circle cx="184" cy="21" r="1.6" fill="none" stroke="#3c3c3c" stroke-width="1.3"/>
 <!-- star -->
 <path d="M868.5 10.8 l2.1 4.5 4.9.5-3.7 3.3 1.1 4.8-4.4-2.5-4.4 2.5 1.1-4.8-3.7-3.3 4.9-.5z" fill="none" stroke="#3c3c3c" stroke-width="1.5" stroke-linejoin="round"/>
 <!-- camera -->
 <rect x="914" y="13.5" width="14.5" height="11.5" rx="1.5" fill="#8c8c8c"/>
 <rect x="917.5" y="11.5" width="7" height="3" rx="1" fill="#8c8c8c"/>
 <circle cx="921.2" cy="19" r="2.8" fill="#fff"/>
 <circle cx="921.2" cy="19" r="1.6" fill="#8c8c8c"/>
 <!-- IQ -->
 <circle cx="958.5" cy="18" r="8.3" fill="#2a74d8"/>
 <text x="952.8" y="21" font-family="Liberation Sans" font-weight="bold" font-size="7.5" fill="#fff">IQ</text>
 <!-- color wheel -->
 <g transform="translate(996,18)">
  <path d="M0 0 L0 -7 A7 7 0 0 1 7 0z" fill="#e8003a"/>
  <path d="M0 0 L7 0 A7 7 0 0 1 0 7z" fill="#1d4fe0"/>
  <path d="M0 0 L0 7 A7 7 0 0 1 -7 0z" fill="#18c23a"/>
  <path d="M0 0 L-7 0 A7 7 0 0 1 0 -7z" fill="#f5d800"/>
  <path d="M0 0 L-5 -5 A7 7 0 0 1 0 -7z" fill="#ff8a00"/>
  <path d="M0 0 L5 -5 A7 7 0 0 1 7 0z" fill="#c000c0"/>
 </g>
 <!-- magnifier -->
 <circle cx="1031.5" cy="16" r="5.2" fill="none" stroke="#8a8a8a" stroke-width="2.6"/>
 <path d="M1035.5 20 L1040 24.8" stroke="#8a8a8a" stroke-width="3"/>
 <path d="M1029.2 16h4.6M1031.5 13.7v4.6" stroke="#8a8a8a" stroke-width="1.2"/>
 <!-- f? -->
 <rect x="1063" y="9.5" width="17" height="17" rx="2.5" fill="#2a2a2a"/>
 <text x="1065.5" y="23" font-family="Liberation Serif" font-style="italic" font-weight="bold" font-size="14" fill="#fff">f?</text>
 <!-- doc icon -->
 <rect x="1103.5" y="10.5" width="10" height="16" rx="1" fill="#f0f0f0" stroke="#d8d8d8" stroke-width="0.8"/>
 <path d="M1106 19.5h5M1108.5 17v5" stroke="#9a9a9a" stroke-width="1.2"/>
 <!-- MD -->
 <rect x="1137.5" y="12.8" width="17" height="10.5" rx="1.5" fill="#111"/>
 <text x="1139" y="21.2" font-family="Liberation Sans" font-weight="bold" font-size="8" fill="#fff">M</text>
 <path d="M1150.5 14.8v5M1148.2 17.8l2.3 2.6 2.3-2.6" fill="none" stroke="#fff" stroke-width="1.3"/>
 <!-- [h/] -->
 <text x="1174" y="23.2" font-family="Liberation Sans" font-size="13.5" fill="#2a2a2a">(h/)</text>
 <!-- G translate -->
 <rect x="1212.5" y="10.5" width="11" height="13" rx="1" fill="#3d85f0"/>
 <rect x="1220" y="15.5" width="9" height="10" rx="1" fill="#d8dde6"/>
 <text x="1214.3" y="20" font-family="Liberation Sans" font-weight="bold" font-size="7" fill="#fff">G</text>
 <!-- link chain green -->
 <circle cx="1254.5" cy="21" r="3.2" fill="none" stroke="#8a8a8a" stroke-width="1.8"/>
 <circle cx="1261" cy="15" r="3.2" fill="none" stroke="#8a8a8a" stroke-width="1.8"/>
 <path d="M1258 21.5 l4-2.2 v-2.2 l4.5 4 -4.5 4 v-2.2z" fill="#5ab82a"/>
 <!-- purple flower -->
 <g transform="translate(1295.5,17.8)" stroke="#5a52e8" stroke-width="1.8">
  <path d="M0 -8V8M-8 0H8M-5.7 -5.7L5.7 5.7M5.7 -5.7L-5.7 5.7M-3 -7.4L3 7.4M3 -7.4L-3 7.4M-7.4 -3L7.4 3M7.4 -3L-7.4 3"/>
  <circle r="4" fill="#fff" stroke="none"/>
  <circle r="4" fill="none"/>
 </g>
 <!-- pinterest -->
 <circle cx="1333.5" cy="18" r="12" fill="#fff"/>
 <circle cx="1333.5" cy="18" r="12" fill="none" stroke="#eee" stroke-width="1.5"/>
 <circle cx="1333" cy="17.5" r="8.5" fill="#d5162b"/>
 <text x="1329" y="22.6" font-family="Liberation Sans" font-weight="bold" font-size="12.5" fill="#fff">p</text>
 <!-- gray pencil circle -->
 <circle cx="1371" cy="17.5" r="7.5" fill="none" stroke="#c8c8c8" stroke-width="1.2"/>
 <path d="M1368 20.5 L1374 14.5" stroke="#a0a0a0" stroke-width="1.8"/>
 <!-- doc with plus -->
 <rect x="1402" y="14" width="16" height="11" fill="#ececec"/>
 <path d="M1412.5 9.5v8M1408.5 13.5h8" stroke="#3cbf3c" stroke-width="2"/>
 <!-- blue scan -->
 <rect x="1438" y="10.5" width="15.5" height="15.5" rx="2.5" fill="#1414e0"/>
 <path d="M1441 15v-2h2.5M1450.5 15v-2h-2.5M1441 21.5v2h2.5M1450.5 21.5v2h-2.5" fill="none" stroke="#fff" stroke-width="1"/>
 <path d="M1443.5 18.2h4.5" stroke="#fff" stroke-width="2.4" stroke-linecap="round"/>
 <!-- puzzle -->
 <path d="M1477 12.5 h4.8 a2 2 0 0 1 4 0 h4.6 v4.6 a2 2 0 0 1 0 4 v4.6 h-13.4z" fill="none" stroke="#3c3c3c" stroke-width="1.6" stroke-linejoin="round"/>
 <path d="M1511.3 11v14" stroke="#d0d6e0" stroke-width="1"/>
 <!-- avatar -->
 <circle cx="1539" cy="17.5" r="10.3" fill="#6d5a48"/>
 <circle cx="1539" cy="15" r="4.2" fill="#c8a488"/>
 <path d="M1531 25 Q1539 17 1547 25 L1545 27 H1533z" fill="#2f4a40"/>
 <!-- dots -->
 <g fill="#3c3c3c"><circle cx="1577" cy="10.8" r="1.6"/><circle cx="1577" cy="17.6" r="1.6"/><circle cx="1577" cy="24.4" r="1.6"/></g>
</svg>
<div class="a t" style="left:201px;top:10.50px;font-size:15px;line-height:15px;letter-spacing:0.035px;color:#1f1f1f;z-index:2">tutorialesrodrigo.com/wp-admin/post.php?post=533&amp;action=edit</div>
<svg class="a" style="left:780px;top:376px;z-index:2" width="220" height="10"><path d="M2 6 L3.75 3.6 L5.50 6 L7.25 3.6 L9.00 6 L10.75 3.6 L12.50 6 L14.25 3.6 L16.00 6 L17.75 3.6 L19.50 6 L21.25 3.6 L23.00 6 L24.75 3.6 L26.50 6 L28.25 3.6 L30.00 6 L31.75 3.6 L33.50 6 L35.25 3.6 L37.00 6 L38.75 3.6 L40.50 6 L42.25 3.6 L44.00 6 L45.75 3.6 L47.50 6 L49.25 3.6 L51.00 6 L52.75 3.6 L54.50 6 L56.25 3.6 L58.00 6 L59.75 3.6 L61.50 6 L63.25 3.6 L65.00 6 L66.75 3.6 L68.50 6 L70.25 3.6 L72.00 6 L73.75 3.6 L75.50 6 L77.25 3.6 L79.00 6 L80.75 3.6 L82.50 6 L84.25 3.6 L86.00 6 L87.75 3.6 L89.50 6 L91.25 3.6 L93.00 6 L94.75 3.6 L96.50 6 L98.25 3.6 L100.00 6 L101.75 3.6 L103.50 6 L105.25 3.6 L107.00 6 L108.75 3.6 L110.50 6 L112.25 3.6 L114.00 6 L115.75 3.6 L117.50 6 L119.25 3.6 L121.00 6 L122.75 3.6 L124.50 6 L126.25 3.6 L128.00 6 L129.75 3.6 L131.50 6 L133.25 3.6 L135.00 6 L136.75 3.6 L138.50 6 L140.25 3.6 L142.00 6 L143.75 3.6 L145.50 6 L147.25 3.6 L149.00 6 L150.75 3.6 L152.50 6 L154.25 3.6 L156.00 6 L157.75 3.6 L159.50 6 L161.25 3.6 L163.00 6 L164.75 3.6 L166.50 6 L168.25 3.6 L170.00 6 L171.75 3.6 L173.50 6 L175.25 3.6 L177.00 6 L178.75 3.6 L180.50 6 L182.25 3.6 L184.00 6 L185.75 3.6 L187.50 6 L189.25 3.6 L191.00 6 L192.75 3.6 L194.50 6 L196.25 3.6 L198.00 6 L199.75 3.6 L201.50 6 L203.25 3.6 L205.00 6 L206.75 3.6 L208.50 6 L210.25 3.6 L212.00 6 L213.75 3.6 L215.50 6" fill="none" stroke="#e0506a" stroke-width="1"/></svg>
<svg class="a" style="left:876px;top:432px;z-index:2" width="12" height="20"><path d="M2.5 1.5h2.5M7 1.5h2.5M6 1.5v16M2.5 17.5h2.5M7 17.5h2.5" stroke="#222" stroke-width="1"/></svg>
<!--E:chrome-->
<!--B:hdrtext-->
<div class="a t" style="left:327.3px;top:67.70px;font-size:15px;line-height:15px;letter-spacing:-0.288px;color:#fff;z-index:10">Biblioteca de diseños</div>
<div class="a t" style="left:306.8px;top:69.02px;font-size:12.5px;line-height:12.5px;letter-spacing:0.000px;color:#fff;font-weight:bold;z-index:10">S</div>
<div class="a t" style="left:699px;top:68.27px;font-size:13.5px;line-height:13.5px;letter-spacing:-0.337px;color:#333;z-index:10">Home · Página</div>
<div class="a t" style="left:932.8px;top:68.57px;font-size:13.5px;line-height:13.5px;letter-spacing:-0.078px;color:#444;z-index:10">Ctrl+K</div>
<div class="a t" style="left:1057.8px;top:67.85px;font-size:14px;line-height:14px;letter-spacing:-0.799px;color:#444;z-index:10">Preview</div>
<div class="a t" style="left:1162.8px;top:67.85px;font-size:14px;line-height:14px;letter-spacing:-0.372px;color:#444;z-index:10">Website setup</div>
<div class="a t" style="left:1489.8px;top:68.25px;font-size:14px;line-height:14px;letter-spacing:-0.727px;color:#fff;z-index:10">Guardar</div>
<!--E:hdrtext-->
<!--B:avatars-->
<svg class="a" style="left:782px;top:407.5px;z-index:1" width="54" height="54" viewBox="0 0 54 54">
 <defs>
  <clipPath id="c1"><circle cx="27" cy="27" r="26.8"/></clipPath>
  <filter id="ab1" x="-50%" y="-50%" width="200%" height="200%"><feGaussianBlur stdDeviation="1.6"/></filter>
  <filter id="ab2" x="-50%" y="-50%" width="200%" height="200%"><feGaussianBlur stdDeviation="0.7"/></filter>
 </defs>
 <g clip-path="url(#c1)">
  <rect width="54" height="54" fill="#7a6a58"/>
  <g filter="url(#ab1)">
   <rect x="0" y="0" width="54" height="20" fill="#5d4c3e"/>
   <ellipse cx="14" cy="18" rx="8" ry="4" fill="#d8a060"/>
   <rect x="20" y="10" width="6" height="22" fill="#b8b8ae"/>
   <rect x="0" y="30" width="22" height="24" fill="#4e5248"/>
   <ellipse cx="12" cy="42" rx="9" ry="6" fill="#8a8e84"/>
   <rect x="40" y="10" width="14" height="30" fill="#8c7664"/>
   <circle cx="50" cy="25" r="3.5" fill="#f6e2b8"/>
   <rect x="44" y="38" width="10" height="16" fill="#222"/>
  </g>
  <g filter="url(#ab2)">
   <path d="M14 54 Q16 36 26 32 L33 30 Q44 33 47 54z" fill="#d4dce2"/>
   <path d="M26 32 L30 54 L33 34z" fill="#c0cad2"/>
   <rect x="28" y="22" width="6" height="10" fill="#d4a890"/>
   <ellipse cx="31" cy="18" rx="6" ry="8" fill="#ddb39c"/>
   <path d="M24 16 Q25 5 32 5 Q39 6 38 16 L40 32 Q40 42 37 46 L35 46 Q37 36 35 28 Q36 18 34 12 Q29 9 26 16z" fill="#3a2a22"/>
  </g>
 </g>
</svg>
<svg class="a" style="left:782px;top:806.5px;z-index:1" width="54" height="54" viewBox="0 0 54 54">
 <defs>
  <clipPath id="c2"><circle cx="27" cy="27" r="26.6"/></clipPath>
  <filter id="ab3" x="-50%" y="-50%" width="200%" height="200%"><feGaussianBlur stdDeviation="0.9"/></filter>
 </defs>
 <g clip-path="url(#c2)">
  <rect width="54" height="54" fill="#d2b636"/>
  <g filter="url(#ab3)">
   <path d="M8 54 Q10 44 18 42 L36 42 Q46 44 48 54z" fill="#e2c2b4"/>
   <rect x="21" y="32" width="12" height="12" fill="#dcb8a6"/>
   <path d="M15 22 Q14 4 27 4 Q40 4 39 22 L38 36 L34 36 L35 20 Q27 14 19 20 L20 36 L16 36z" fill="#6a4a36"/>
   <ellipse cx="27" cy="23" rx="8.5" ry="11" fill="#e8c6b6"/>
   <path d="M22 20h4M29 20h4" stroke="#7a5a50" stroke-width="1.2"/>
   <path d="M24 30 Q27 32 30 30" stroke="#d06a78" stroke-width="1.6" fill="none"/>
  </g>
 </g>
</svg>
<svg class="a" style="left:778px;top:611px" width="115" height="24">
 <g fill="#2222cc">
<path transform="translate(13.6,12.6) scale(0.9)" d="M0 -9.5 L2.25 -3.1 L9 -3 L3.6 1.1 L5.6 7.7 L0 3.8 L-5.6 7.7 L-3.6 1.1 L-9 -3 L-2.25 -3.1z"/><path transform="translate(35.35,12.6) scale(0.9)" d="M0 -9.5 L2.25 -3.1 L9 -3 L3.6 1.1 L5.6 7.7 L0 3.8 L-5.6 7.7 L-3.6 1.1 L-9 -3 L-2.25 -3.1z"/><path transform="translate(57.1,12.6) scale(0.9)" d="M0 -9.5 L2.25 -3.1 L9 -3 L3.6 1.1 L5.6 7.7 L0 3.8 L-5.6 7.7 L-3.6 1.1 L-9 -3 L-2.25 -3.1z"/><path transform="translate(78.85,12.6) scale(0.9)" d="M0 -9.5 L2.25 -3.1 L9 -3 L3.6 1.1 L5.6 7.7 L0 3.8 L-5.6 7.7 L-3.6 1.1 L-9 -3 L-2.25 -3.1z"/><path transform="translate(100.6,12.6) scale(0.9)" d="M0 -9.5 L2.25 -3.1 L9 -3 L3.6 1.1 L5.6 7.7 L0 3.8 L-5.6 7.7 L-3.6 1.1 L-9 -3 L-2.25 -3.1z"/>
 </g>
</svg>
<!--E:avatars-->
</body></html>
